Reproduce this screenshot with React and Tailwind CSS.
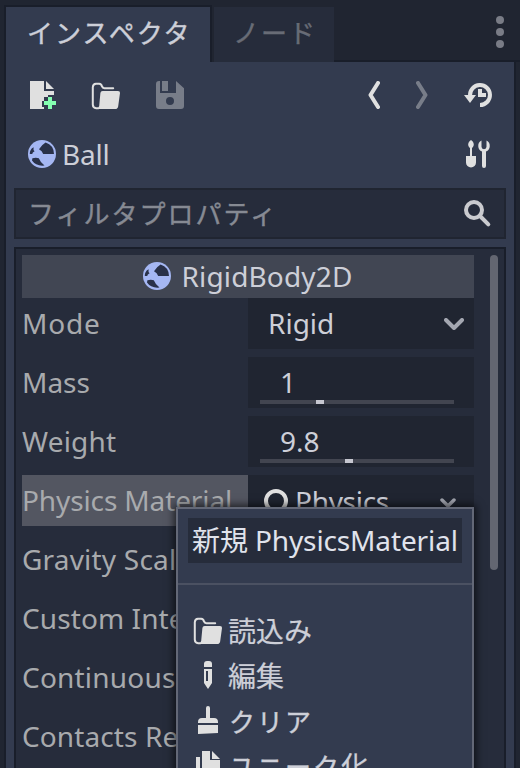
import React from "react";

const SANS = "font-['Noto_Sans','Noto_Sans_CJK_JP',sans-serif]";

function Icon({ children, className = "" }) {
  return (
    <svg viewBox="0 0 16 16" fill="#e0e0e0" className={`block h-8 w-8 shrink-0 ${className}`}>
      {children}
    </svg>
  );
}

const NewIcon = () => (
  <Icon>
    <path d="M1 1h7v5h5v2H10v1H8v2H7v3h1v1H1z" />
    <path d="M9 1l4 4H9z" />
    <path d="M10 9h2v2h2v2h-2v2h-2v-2H8v-2h2z" fill="#84ffb1" />
  </Icon>
);

const LoadIcon = ({ className }) => (
  <Icon className={className}>
    <path
      d="M4.2 14.6H3.1Q1.4 14.5 1.4 12.8V4.1Q1.5 2.5 3 2.4H4.6Q5.7 2.5 6 3.7Q6.3 4.6 7.2 4.6H11.6"
      fill="none"
      stroke="#e0e0e0"
      strokeWidth="1"
      strokeLinecap="round"
    />
    <path d="M6.3 6H14Q15.1 6 15 7L14.1 13.6Q13.9 15 12.6 15H3.2Q4.4 14.8 4.6 13.4L5.2 7Q5.3 6.1 6.3 6z" />
  </Icon>
);

const SaveIcon = () => (
  <Icon className="opacity-40">
    <path
      fillRule="evenodd"
      d="M2.5 1H3v6h8V1l4 3.6v8.9A1.5 1.5 0 0 1 13.5 15h-11A1.5 1.5 0 0 1 1 13.5v-11A1.5 1.5 0 0 1 2.5 1zM8 9a2 2 0 1 0 0 4a2 2 0 1 0 0-4z"
    />
    <path d="M4 1h3v5H4z" />
  </Icon>
);

const HistoryIcon = () => (
  <Icon>
    <path d="M4 8.3A5 5 0 1 1 9 13" fill="none" stroke="#e0e0e0" strokeWidth="2" />
    <path d="M1 8h6l-3 4z" />
    <path d="M8 5h2v2h2v2H8z" />
  </Icon>
);

const BallIcon = () => (
  <svg viewBox="0 0 28 28" className="block h-7 w-7 shrink-0">
    <circle cx="14" cy="14" r="14" fill="#a5b7f3" />
    <g fill="#293149">
      <path d="M11 9.300Q13.500 5 17.600 2.600A12.300 12.300 0 0 1 26 14H15.200Q14.200 10.800 11 9.300z" />
      <path d="M2.200 11Q3.500 7.700 5.600 7.200Q5 9.800 6.600 11.200Q4.300 12.200 4.200 14H1.800Q1.800 12.300 2.200 11z" />
      <path d="M4.400 18.200Q8 17.400 10.800 18.200Q12.500 22.500 16.500 25.600Q8 26.500 4 20.600z" />
    </g>
  </svg>
);

const ToolsIcon = () => (
  <svg viewBox="0 0 24 28" fill="#e0e0e0" className="block h-7 w-6 shrink-0">
    <path d="M5 0C8.700 2.600 8.400 6 6 8v8h4v6.500a5 5 0 0 1-10 0V16h4V8C1.600 6 1.300 2.600 5 0z" />
    <path d="M15.500 .6v6.100a2.500 2.500 0 0 0 5 0V.6A6 6 0 0 1 20 11.500v14.500a2 2 0 0 1-4 0V11.500A6 6 0 0 1 15.500 .6z" />
  </svg>
);

const SearchIcon = () => (
  <svg viewBox="0 0 28 28" fill="none" stroke="#cacbcf" className="block h-7 w-7 shrink-0">
    <circle cx="10" cy="10" r="8" strokeWidth="4" />
    <path d="M16 16l8.300 8.300" strokeWidth="4" strokeLinecap="round" />
  </svg>
);

const PencilIcon = () => (
  <Icon>
    <path d="M6 4V2.500Q6 1 7.500 1h1Q10 1 10 2.500V4z" />
    <path fillRule="evenodd" d="M6 5h4v7l-2 3l-2-3zM7 6v5h1V6z" />
  </Icon>
);

const ClearIcon = () => (
  <Icon>
    <path d="M7 7V2a1 1 0 0 1 2 0v5h2a2 2 0 0 1 2 2v.500H3V9a2 2 0 0 1 2-2z" />
    <path d="M3 10.500h10v4L3 15z" />
  </Icon>
);

const DuplicateIcon = () => (
  <Icon>
    <path d="M5 1h4v4.500h5V12H5z" />
    <path d="M10 1l4 4h-4z" />
    <path d="M2 4h2v9h7v2H2z" />
  </Icon>
);

function Chevron({ box, d, width, color, className }) {
  return (
    <svg viewBox={box} fill="none" stroke={color} strokeWidth={width} strokeLinecap="round" strokeLinejoin="round" className={`block shrink-0 ${className}`}>
      <path d={d} />
    </svg>
  );
}

function Kana({ children, className = "" }) {
  return (
    <span className={`whitespace-nowrap text-[26px] tracking-[2px] [-webkit-text-stroke:0.4px_currentColor] ${className}`}>
      {children}
    </span>
  );
}

function Row({ label, tracking = "", selected, children }) {
  return (
    <div className="mb-2 flex h-[51px] shrink-0 text-[#a8aaad]">
      <div className={`w-[226px] shrink-0 whitespace-nowrap leading-[51px] ${tracking} ${selected ? "bg-[#535661]" : ""}`}>{label}</div>
      <div className="w-[226px] bg-[#202531] text-[#cdcfd8]">{children}</div>
    </div>
  );
}

function NumberField({ value, grab }) {
  return (
    <div className="flex h-full flex-col px-3">
      <div className="h-[43px] pl-5 leading-[51px]">{value}</div>
      <div className="h-1 w-[194px] shrink-0 bg-[#424550]">
        <div className={`h-1 w-2 bg-[#c6c7d0] ${grab}`} />
      </div>
    </div>
  );
}

function MenuItem({ icon, children }) {
  return (
    <div className="flex h-[45px] items-center gap-1 pl-[14px]">
      <div className="-mt-0.5">{icon}</div>
      <span className="whitespace-nowrap [-webkit-text-stroke:0.2px_currentColor]">{children}</span>
    </div>
  );
}

export default function App() {
  return (
    <div className={`relative flex h-[768px] w-[520px] flex-col overflow-hidden bg-[#202531] text-[28px] leading-none text-[#cdcfd8] ${SANS}`}>
      <header className="flex h-[62px] shrink-0 pl-1 pt-[5px]">
        <div className="z-10 h-[57px] w-[208px] border-x-2 border-t-2 border-[#191e2a] bg-[#333b4f] pl-[21px] leading-[50px]">
          <Kana>インスペクタ</Kana>
        </div>
        <div className="mt-[2px] h-[55px] w-[122px] border-l-2 border-[#202531] bg-[#262c3b] pl-[19px] leading-[50px] text-[#686c76]">
          <Kana>ノード</Kana>
        </div>
        <div className="flex flex-1 flex-col items-end border-b-2 border-[#191e2a] pr-4 pt-[11px]">
          <div className="flex flex-col gap-1">
            <i className="h-2 w-2 rounded-full bg-[#797c86]" />
            <i className="h-2 w-2 rounded-full bg-[#797c86]" />
            <i className="h-2 w-2 rounded-full bg-[#797c86]" />
          </div>
        </div>
      </header>

      <main className="ml-1 flex w-[512px] flex-1 flex-col border-x-2 border-[#191e2a] bg-[#333b4f] px-2">
        <div className="flex h-[66px] shrink-0 items-center pl-[14px] pr-3">
          <NewIcon />
          <LoadIcon className="ml-[30px]" />
          <div className="ml-8"><SaveIcon /></div>
          <Chevron box="0 0 12 28" d="M10 2L2.500 14L10 26" width="4" color="#e0e0e0" className="ml-[182px] h-7 w-3" />
          <Chevron box="0 0 12 28" d="M2 2L9.500 14L2 26" width="4" color="#787d89" className="ml-9 h-7 w-3" />
          <div className="ml-auto"><HistoryIcon /></div>
        </div>

        <div className="flex h-[60px] shrink-0 items-start pl-[14px] pr-4">
          <div className="pt-3"><BallIcon /></div>
          <span className="ml-[6px] leading-[52px] -tracking-[0.2px]">Ball</span>
          <div className="ml-auto pt-3"><ToolsIcon /></div>
        </div>

        <div className="flex h-[51px] shrink-0 items-center justify-between border-2 border-[#202531] bg-[#262c3b] pl-3 pr-[12px]">
          <Kana className="text-[#868a93]">フィルタプロパティ</Kana>
          <SearchIcon />
        </div>

        <section className="mt-2 flex min-h-0 flex-1 overflow-hidden border-x-2 border-t-2 border-[#191e2a] bg-[#262c3b] pl-1.5 pt-1.5">
          <div className="w-[452px] shrink-0">
            <div className="flex h-[43px] items-center justify-center gap-[10px] bg-[#414653]">
              <div className="-mt-0.5"><BallIcon /></div>
              <span className="-mt-0.5 tracking-[0.15px]">RigidBody2D</span>
            </div>
            <Row label="Mode" tracking="tracking-[0.8px]">
              <div className="flex h-full items-center justify-between pl-5 pr-[10px]">
                <span className="-mt-0.5">Rigid</span>
                <Chevron box="0 0 20 12" d="M2 2L10 10L18 2" width="4" color="#a4a7b1" className="h-3 w-5" />
              </div>
            </Row>
            <Row label="Mass">
              <NumberField value="1" grab="ml-14" />
            </Row>
            <Row label="Weight" tracking="tracking-[0.2px]">
              <NumberField value="9.8" grab="ml-[85px]" />
            </Row>
            <Row label="Physics Material" tracking="-tracking-[0.12px]" selected>
              <div className="flex h-full items-center pl-4 pr-[18px]">
                <div className="h-6 w-6 rounded-full border-4 border-[#e0e0e0]" />
                <span className="ml-[7px] -tracking-[0.3px]">Physics</span>
                <Chevron box="0 0 16 10" d="M2 2L8 8L14 2" width="3.500" color="#a4a7b1" className="ml-auto mt-1 h-[10px] w-4" />
              </div>
            </Row>
            <Row label="Gravity Scale" tracking="tracking-[0.2px]" />
            <Row label="Custom Integrator" tracking="tracking-[0.1px]" />
            <Row label="Continuous Cd" tracking="tracking-[0.2px]" />
            <Row label="Contacts Reported" tracking="tracking-[0.1px]" />
          </div>
          <div className="ml-4 h-[315px] w-2 rounded-full bg-[#636671]" />
        </section>
      </main>

      <div className="absolute left-[176px] top-[507px] z-20 h-[280px] w-[298px] border-2 border-[#636877] bg-[#333b4f] shadow-[0_0_8px_2px_rgba(0,0,0,0.65)]">
        <div className="mx-[10px] mt-[9px] h-[45px] whitespace-nowrap bg-[#262c3b] pl-1 leading-[45px] -tracking-[0.12px] text-[#e0e3ec]">新規 PhysicsMaterial</div>
        <div className="mt-5 h-[2px] bg-[#4b5162]" />
        <div className="mt-[23px]">
          <MenuItem icon={<LoadIcon />}>読込み</MenuItem>
          <MenuItem icon={<PencilIcon />}>編集</MenuItem>
          <MenuItem icon={<ClearIcon />}><Kana className="pl-px">クリア</Kana></MenuItem>
          <MenuItem icon={<DuplicateIcon />}><Kana className="pl-px">ユニーク</Kana>化</MenuItem>
        </div>
      </div>
    </div>
  );
}
